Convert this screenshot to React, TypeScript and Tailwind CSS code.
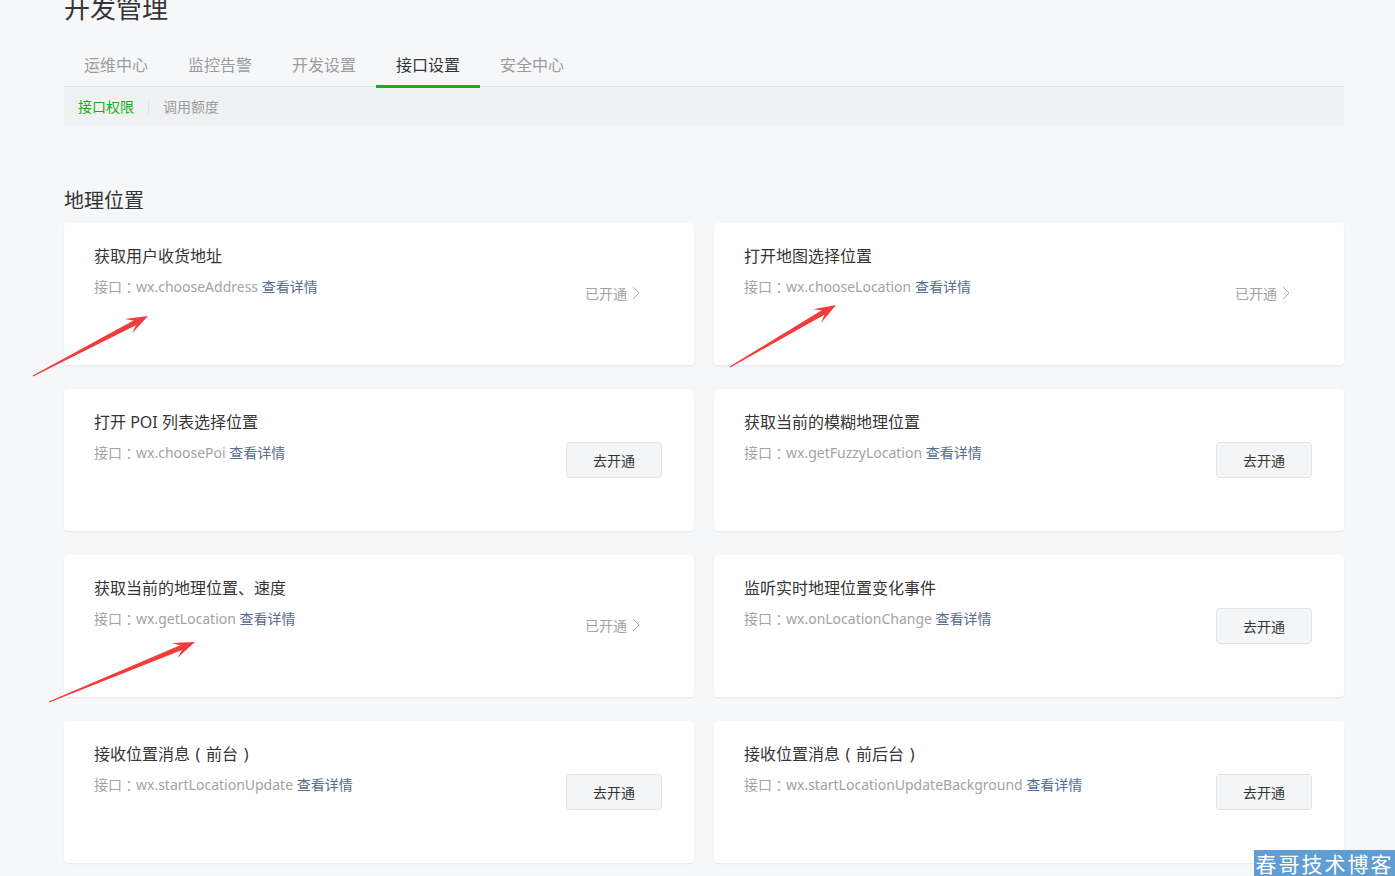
import React from "react";

type Item = { title: React.ReactNode; api: string; opened: boolean };

function P({ c }: { c: string }) {
  return <span className="inline-block w-[16px] text-center">{c}</span>;
}

const items: Item[] = [
  { title: "获取用户收货地址", api: "wx.chooseAddress", opened: true },
  { title: "打开地图选择位置", api: "wx.chooseLocation", opened: true },
  { title: "打开 POI 列表选择位置", api: "wx.choosePoi", opened: false },
  { title: "获取当前的模糊地理位置", api: "wx.getFuzzyLocation", opened: false },
  { title: "获取当前的地理位置、速度", api: "wx.getLocation", opened: true },
  { title: "监听实时地理位置变化事件", api: "wx.onLocationChange", opened: false },
  {
    title: (
      <>
        接收位置消息<P c="(" />前台<P c=")" />
      </>
    ),
    api: "wx.startLocationUpdate",
    opened: false,
  },
  {
    title: (
      <>
        接收位置消息<P c="(" />前后台<P c=")" />
      </>
    ),
    api: "wx.startLocationUpdateBackground",
    opened: false,
  },
];

const tabs = ["运维中心", "监控告警", "开发设置", "接口设置", "安全中心"];

function arrowPoints(tx: number, ty: number, hx: number, hy: number) {
  const dx = hx - tx;
  const dy = hy - ty;
  const len = Math.sqrt(dx * dx + dy * dy);
  const ux = dx / len;
  const uy = dy / len;
  const nx = -uy;
  const ny = ux;
  const p = (x: number, y: number) => `${x.toFixed(1)},${y.toFixed(1)}`;
  const notchX = hx - ux * 15;
  const notchY = hy - uy * 15;
  const barbX = hx - ux * 22;
  const barbY = hy - uy * 22;
  return [
    p(tx + nx * 0.5, ty + ny * 0.5),
    p(notchX + nx * 2.6, notchY + ny * 2.6),
    p(barbX + nx * 8, barbY + ny * 8),
    p(hx, hy),
    p(barbX - nx * 8, barbY - ny * 8),
    p(notchX - nx * 2.6, notchY - ny * 2.6),
    p(tx - nx * 0.5, ty - ny * 0.5),
  ].join(" ");
}

function Chevron() {
  return (
    <svg width="8" height="14" viewBox="0 0 8 14" className="ml-[5px] -mt-[3px]">
      <path d="M1 1 L7 7 L1 13" fill="none" stroke="#ababab" strokeWidth="1" />
    </svg>
  );
}

function Card({ item }: { item: Item }) {
  return (
    <div className="h-[142px] bg-white rounded-[4px] shadow-[0_1px_2px_rgba(0,0,0,0.07)] flex items-center justify-between pl-[30px] pr-[32px]">
      <div className="self-start pt-[21px]">
        <div className="text-[16px] leading-[24px] text-[#353535]">{item.title}</div>
        <div className="mt-[9px] h-[20px] flex items-center text-[14px] leading-[20px] text-[#a3a3a3] whitespace-pre">
          <span>接口</span>
          <span
            className="w-[14px] text-center"
            style={{ fontFamily: '"Noto Sans CJK TC", sans-serif' }}
          >
            ：
          </span>
          <span>{item.api} </span>
          <span className="text-[#576b95]">查看详情</span>
        </div>
      </div>
      <div className="w-[96px] flex justify-center">
        {item.opened ? (
          <div className="flex items-center text-[14px] leading-[20px] text-[#a3a3a3] -ml-[3px]">
            已开通
            <Chevron />
          </div>
        ) : (
          <button className="w-[96px] h-[36px] rounded-[4px] border border-[#e1e2e4] bg-[#f4f5f7] text-[14px] text-[#353535]">
            去开通
          </button>
        )}
      </div>
    </div>
  );
}

export default function App() {
  return (
    <div
      className="relative w-[1395px] h-[876px] overflow-hidden bg-[#f6f7f9]"
      style={{ fontFamily: '"Noto Sans", "Noto Sans CJK SC", sans-serif' }}
    >
      <div className="ml-[64px] w-[1280px]">
        <div className="-mt-[5px] text-[26px] leading-[26px] text-[#353535]">开发管理</div>
        <div className="mt-[24px] flex border-b border-[#e3e4e6]">
          {tabs.map((t) => (
            <div
              key={t}
              className={
                t === "接口设置"
                  ? "px-[20px] h-[43px] pb-[1px] flex items-center text-[16px] text-[#353535] border-b-[3px] border-[#1aad19] -mb-[2px]"
                  : "px-[20px] h-[43px] pb-[1px] flex items-center text-[16px] text-[#9c9c9c] border-b-[3px] border-transparent -mb-[2px]"
              }
            >
              {t}
            </div>
          ))}
        </div>
        <div className="h-[39px] bg-[#f0f1f3] flex items-center px-[14px] text-[14px]">
          <span className="text-[#1aad19]">接口权限</span>
          <span className="mx-[14px] w-px h-[14px] bg-[#dfe0e2]" />
          <span className="text-[#9c9c9c]">调用额度</span>
        </div>
        <div className="mt-[61px] text-[20px] leading-[28px] text-[#353535]">地理位置</div>
        <div className="mt-[8px] grid grid-cols-2 gap-x-[20px] gap-y-[24px]">
          {items.map((it) => (
            <Card key={it.api} item={it} />
          ))}
        </div>
      </div>

      <svg className="absolute left-0 top-0 pointer-events-none" width="1395" height="876">
        <polygon points={arrowPoints(33, 376, 148, 316)} fill="#f23b3b" />
        <polygon points={arrowPoints(730, 367, 836, 305)} fill="#f23b3b" />
        <polygon points={arrowPoints(49, 702, 195, 642)} fill="#f23b3b" />
      </svg>

      <div
        className="absolute right-0 bottom-0 w-[141px] h-[26px] bg-[#5f9dd3] text-white text-[21px] leading-none tracking-[2px] flex items-center justify-center"
        style={{ fontFamily: '"Noto Sans CJK SC", serif' }}
      >
        春哥技术博客
      </div>
    </div>
  );
}
